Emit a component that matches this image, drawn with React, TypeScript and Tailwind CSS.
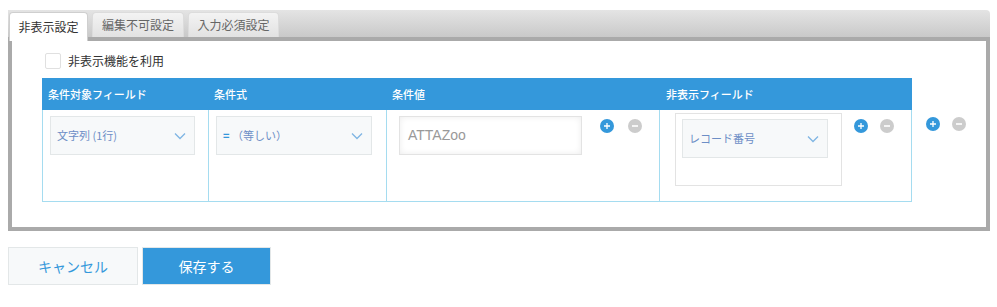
import React from "react";

const font = { fontFamily: '"Noto Sans CJK JP", "Noto Sans", sans-serif' };

function Chevron() {
  return (
    <svg width="12" height="8" viewBox="0 0 12 8" className="shrink-0">
      <path d="M1 1.5 L6 6.5 L11 1.5" fill="none" stroke="#7fb5e3" strokeWidth="1.3" />
    </svg>
  );
}

function Plus() {
  return (
    <div className="w-[14px] h-[14px] rounded-full bg-[#3498db] flex items-center justify-center">
      <svg width="8" height="8" viewBox="0 0 8 8">
        <path d="M4 1 V7 M1 4 H7" stroke="white" strokeWidth="1.3" />
      </svg>
    </div>
  );
}

function Minus() {
  return (
    <div className="w-[14px] h-[14px] rounded-full bg-[#cccccc] flex items-center justify-center">
      <svg width="8" height="8" viewBox="0 0 8 8">
        <path d="M1 4 H7" stroke="white" strokeWidth="1.6" />
      </svg>
    </div>
  );
}

function Select({ label, width, blueFirst }: { label: string; width: string; blueFirst?: boolean }) {
  return (
    <div className={`${width} h-[39px] bg-[#f7f9fa] border border-[#e3e7e8] flex items-center justify-between pl-[6px] pr-[8px]`}>
      <span className="text-[11px] text-[#6d8ec6]">
        {blueFirst ? (
          <>
            <span className="text-[#3498db] font-bold">=</span> （等しい）
          </>
        ) : (
          label
        )}
      </span>
      <Chevron />
    </div>
  );
}

export default function App() {
  return (
    <div className="w-[997px] h-[307px] bg-white" style={font}>
      <div className="pt-[10px] pl-[8px] w-[990px]">
        {/* Tabs */}
        <div className="h-[27px] bg-gradient-to-b from-[#e4e4e4] to-[#c9c9c9] rounded-tr-[4px] flex items-end gap-[4px] pl-[1px]">
          <div className="relative z-10 h-[29px] -mb-[4px] w-[79px] bg-white border border-b-0 border-[#cfcfcf] rounded-t-[4px] flex items-start justify-center pt-[5px] text-[12px] text-[#333]">
            非表示設定
          </div>
          <div className="h-[25px] w-[92px] bg-gradient-to-b from-[#f3f3f3] to-[#e2e2e2] border border-b-0 border-[#dcdcdc] rounded-t-[4px] flex items-center justify-center text-[12px] text-[#666]">
            編集不可設定
          </div>
          <div className="h-[25px] w-[91px] bg-gradient-to-b from-[#f3f3f3] to-[#e2e2e2] border border-b-0 border-[#dcdcdc] rounded-t-[4px] flex items-center justify-center text-[12px] text-[#666]">
            入力必須設定
          </div>
        </div>

        {/* Panel */}
        <div className="h-[194px] border-4 border-[#aaaaaa] pl-[30px] pt-[12px]">
          <div className="flex items-center h-[16px] ml-[3px] gap-[7px]">
            <div className="w-[16px] h-[16px] border border-[#e0e0e0] rounded-[2px] bg-white" />
            <span className="text-[12px] text-[#333]">非表示機能を利用</span>
          </div>

          <div className="flex mt-[9px]">
            <div className="w-[870px]">
              <div className="grid grid-cols-[166px_178px_273px_253px] h-[32px] bg-[#3498db] text-white text-[11px] font-medium">
                <div className="pl-[6px] flex items-center">条件対象フィールド</div>
                <div className="pl-[6px] flex items-center">条件式</div>
                <div className="pl-[6px] flex items-center">条件値</div>
                <div className="pl-[7px] flex items-center">非表示フィールド</div>
              </div>
              <div className="grid grid-cols-[166px_178px_273px_253px] h-[92px] border-b border-[#a5dcf0]">
                <div className="border-l border-[#a5dcf0] pl-[7px] pt-[6px]">
                  <Select label="文字列 (1行)" width="w-[145px]" />
                </div>
                <div className="border-l border-[#a5dcf0] pl-[7px] pt-[6px]">
                  <Select label="" width="w-[156px]" blueFirst />
                </div>
                <div className="border-l border-[#a5dcf0] pl-[12px] pt-[6px] flex items-start">
                  <div className="w-[183px] h-[39px] border border-[#e3e3e3] bg-white shadow-[inset_0_0_6px_rgba(0,0,0,0.08)] flex items-center pl-[8px] text-[14px] text-[#999] font-['Liberation_Sans',sans-serif]">
                    ATTAZoo
                  </div>
                  <div className="flex gap-[14px] ml-[18px] mt-[3px]">
                    <Plus />
                    <Minus />
                  </div>
                </div>
                <div className="border-l border-r border-[#a5dcf0] pl-[15px] pt-[3px] flex items-start">
                  <div className="w-[167px] h-[73px] border border-[#e3e3e3] pl-[6px] pt-[5px]">
                    <Select label="レコード番号" width="w-[146px]" />
                  </div>
                  <div className="flex gap-[12px] ml-[12px] mt-[6px]">
                    <Plus />
                    <Minus />
                  </div>
                </div>
              </div>
            </div>
            <div className="flex gap-[12px] ml-[14px] mt-[39px] h-[14px]">
              <Plus />
              <Minus />
            </div>
          </div>
        </div>

        {/* Buttons */}
        <div className="flex gap-[4px] mt-[16px]">
          <button className="w-[130px] h-[38px] bg-[#f7f9fa] border border-[#e3e7e8] text-[14px] text-[#3498db]">
            キャンセル
          </button>
          <button className="w-[129px] h-[38px] bg-[#3498db] border border-[#e3e7e8] text-[14px] text-white">
            保存する
          </button>
        </div>
      </div>
    </div>
  );
}
